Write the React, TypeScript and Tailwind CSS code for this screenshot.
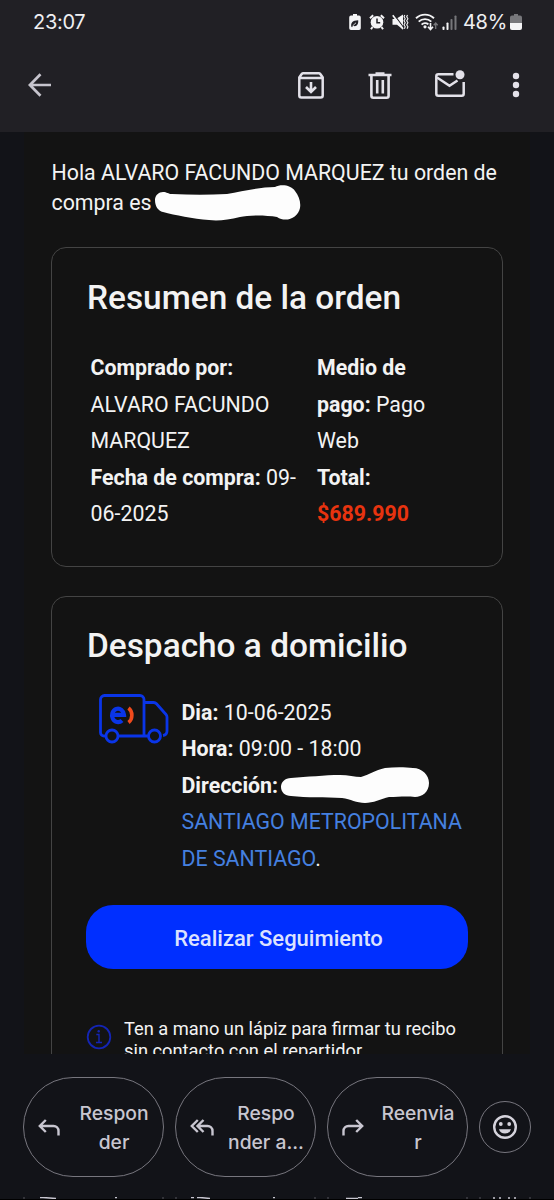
import React from "react";

interface IconProps {
  className?: string;
}

function BatteryLeafIcon() {
  return (
    <svg width="12" height="16" viewBox="0 0 12 16">
      <path d="M4 0h4v1.6h2a1.8 1.8 0 0 1 1.8 1.8v10.8A1.8 1.8 0 0 1 10 16H2a1.8 1.8 0 0 1-1.8-1.8V3.4A1.8 1.8 0 0 1 2 1.600h2z" fill="#f4f4f6" />
      <path d="M2.300 12.500c-.6-3.600 1.200-6 6.900-6.200.5 4.700-2.200 6.800-5 5.500l-1.200 1.500z" fill="#212025" />
      <path d="M3.500 12 7 8.800" stroke="#f4f4f6" strokeWidth="0.8" />
    </svg>
  );
}

function AlarmIcon() {
  return (
    <svg width="16" height="16" viewBox="0 0 16 16" fill="none">
      <circle cx="8" cy="8.300" r="6.300" fill="#f4f4f6" />
      <path d="M1 4.200 4.200 1.200M15 4.200 11.800 1.200M3.500 13l-1.500 2.200M12.500 13l1.500 2.200" stroke="#f4f4f6" strokeWidth="2" />
      <path d="M8 4.600v4.200h3.200" stroke="#212025" strokeWidth="1.500" />
    </svg>
  );
}

function MuteIcon() {
  return (
    <svg width="17" height="16" viewBox="0 0 17 16" fill="none">
      <path d="M.5 5h3.500l7-4.500v15l-6-4.700H.5z" fill="#f4f4f6" />
      <path d="M2 .5 12 14" stroke="#212025" strokeWidth="1.200" />
      <path d="M.8 1.200 11 15" stroke="#f4f4f6" strokeWidth="1.600" />
      <path d="m12.800 1-.8 1.800 1.200 2-1.200 2 1.200 2-1.200 2 1.200 2-.8 2M15.500 1l-.8 1.800 1.200 2-1.200 2 1.200 2-1.200 2 1.200 2-.8 2" stroke="#f4f4f6" strokeWidth="1.100" />
    </svg>
  );
}

function WifiIcon() {
  return (
    <svg width="24" height="18" viewBox="0 0 24 18" fill="none">
      <path d="M1 5.200a13 13 0 0 1 18 0M3.700 8.600a9.200 9.200 0 0 1 12.600 0M6.600 11.600a5 5 0 0 1 6.800-.2" stroke="#f4f4f6" strokeWidth="1.900" />
      <circle cx="10" cy="13.800" r="1.600" fill="#f4f4f6" />
      <path d="M15.500 10v6.500M13 13.800l2.500 2.700 2.500-2.700" stroke="#f4f4f6" strokeWidth="1.600" />
      <path d="M20.700 16v-6M18.700 12.300l2-2.300 2 2.300" stroke="#77777b" strokeWidth="1.300" />
    </svg>
  );
}

function SignalIcon() {
  return (
    <svg width="15" height="15" viewBox="0 0 15 15">
      <rect x="0.500" y="11.500" width="2" height="3.500" rx="0.800" fill="#f4f4f6" />
      <rect x="4.500" y="7.500" width="2" height="7.500" rx="0.800" fill="#f4f4f6" />
      <rect x="8.500" y="4" width="2" height="11" rx="0.800" fill="#77777b" />
      <rect x="12.500" y="0.500" width="2" height="14.500" rx="0.800" fill="#77777b" />
    </svg>
  );
}

function BatteryIcon() {
  return (
    <svg width="12" height="16" viewBox="0 0 12 16">
      <path d="M4 0h4v1.600h2a2 2 0 0 1 2 2V9H0V3.600a2 2 0 0 1 2-2h2z" fill="#77777b" />
      <path d="M0 9h12v5a2 2 0 0 1-2 2H2a2 2 0 0 1-2-2z" fill="#f4f4f6" />
    </svg>
  );
}

function BackIcon() {
  return (
    <svg width="24" height="24" viewBox="0 0 24 24" fill="none" stroke="#c6c4cd" strokeWidth="2.700">
      <path d="M12.500 1.200 1.900 12l10.600 10.800M2 12h21" />
    </svg>
  );
}

function ArchiveIcon() {
  return (
    <svg width="26" height="27" viewBox="0 0 26 27" fill="none" stroke="#e3e1e9" strokeWidth="2.500">
      <path d="M1.300 5.500V23.500a2 2 0 0 0 2 2h19.400a2 2 0 0 0 2-2V5.500L22.500 2.300a2 2 0 0 0-1.500-1H5a2 2 0 0 0-1.500 1zM2 6h22" />
      <path d="M13 10v8.500M8 15l5 5 5-5" strokeWidth="2.600" />
    </svg>
  );
}

function TrashIcon() {
  return (
    <svg width="24" height="27" viewBox="0 0 24 27" fill="none" stroke="#e3e1e9" strokeWidth="2.600">
      <path d="M.5 3h23M7.500 1.500h9" />
      <path d="M3.400 3v20.700a2 2 0 0 0 2 2h13.200a2 2 0 0 0 2-2V3M9.200 8v13.500M14.800 8v13.500" />
    </svg>
  );
}

function UnreadIcon() {
  return (
    <svg width="30" height="27" viewBox="0 0 30 27" fill="none" stroke="#e3e1e9" strokeWidth="2.500">
      <path d="M18.500 4.200H3.300a2 2 0 0 0-2 2v17.500a2 2 0 0 0 2 2h23.400a2 2 0 0 0 2-2V12" />
      <path d="m2 7.500 12.500 8.300L22.500 10.500" />
      <circle cx="25" cy="4.800" r="4.500" fill="#e3e1e9" stroke="none" />
    </svg>
  );
}

function MoreIcon() {
  return (
    <svg width="8" height="26" viewBox="0 0 8 26" fill="#e3e1e9">
      <circle cx="4" cy="4" r="3.200" />
      <circle cx="4" cy="13" r="3.200" />
      <circle cx="4" cy="22" r="3.200" />
    </svg>
  );
}

function TruckIcon() {
  return (
    <svg width="70" height="50" viewBox="0 0 70 50" fill="none" stroke="#0a35e8" strokeWidth="2.800">
      <path d="M6 42H5a3.500 3.500 0 0 1-3.500-3.500V5.500A4 4 0 0 1 5.500 1.500H41a4 4 0 0 1 4 4V42M19.500 42H49" />
      <path d="M45 8.500h9.500a4 4 0 0 1 3 1.300L67 20.500a4 4 0 0 1 1 2.600V37c0 2.500-1 4-4 4.500" />
      <circle cx="13" cy="42" r="6" />
      <circle cx="55.500" cy="42" r="6" />
      <path d="M13 20.800h12a6 6.700 0 1 0-2 5.600" strokeWidth="4.200" />
      <path d="M29.500 14c4.500 3.500 4.500 11 0 14.500" stroke="#f04a1c" strokeWidth="3.600" />
    </svg>
  );
}

function InfoIcon() {
  return (
    <svg width="26" height="26" viewBox="0 0 26 26" fill="none" stroke="#1425b4" strokeWidth="1.800">
      <circle cx="13" cy="13" r="11.300" />
      <path d="M10.300 10.500H13V18.500M10 18.500h6" strokeWidth="1.400" />
      <circle cx="12.700" cy="7.300" r="1.200" fill="#1425b4" stroke="none" />
    </svg>
  );
}

function ReplyIcon({ className }: IconProps) {
  return (
    <svg className={className} width="22" height="17" viewBox="0 0 22 17" fill="none" stroke="#c8c6d0" strokeWidth="2.400">
      <path d="M7.800 1 1.800 7l6 6M2 7h13.500a5 5 0 0 1 5 5v4.500" />
    </svg>
  );
}

function ReplyAllIcon() {
  return (
    <svg width="24" height="17" viewBox="0 0 24 17" fill="none" stroke="#c8c6d0" strokeWidth="2.400">
      <path d="m7.800 1-6 6 6 6M13.500 1l-6 6 6 6M8 7h9.500a5 5 0 0 1 5 5v4.500" />
    </svg>
  );
}

function SmileIcon() {
  return (
    <svg width="26" height="26" viewBox="0 0 26 26" fill="#d5d3dc">
      <circle cx="13" cy="13" r="10.800" fill="none" stroke="#d5d3dc" strokeWidth="2.400" />
      <circle cx="8.800" cy="10" r="1.900" />
      <circle cx="17.200" cy="10" r="1.900" />
      <path d="M7 15.200h12a6.300 6.300 0 0 1-12 0z" />
    </svg>
  );
}

// white marker strokes that hide the private data
function OrderRedaction() {
  return (
    <span className="relative inline-block w-0">
      <svg className="absolute -left-[3px] -top-[26px]" width="148" height="38" viewBox="0 0 148 38">
        <path d="M1 16C1 11 5 8 9 8c4 0 5 2 9 2 19 1 37 1 55 0 16-3 34-7 48-7 6-3 16-2 20 4 4 5 6 11 5 17-2 10-14 15-23 9-11-2-29-2-37 0-12 3-22 4-31 3-16-1-34-5-46-8C4 27 1 22 1 16z" fill="#fdfdfd" />
      </svg>
    </span>
  );
}

function AddressRedaction() {
  return (
    <span className="relative inline-block w-0">
      <svg className="absolute left-[2px] -top-[26px]" width="150" height="37" viewBox="0 -1 150 37">
        <path d="M1 19c0-5 4-9 10-9 16-1 34-3 49-3 8 0 15 2 21 2 8-2 14-7 24-9 9-1 20-1 28 0 9 0 16 7 16 15 0 9-7 14-14 14-9-1-17 0-26 0-8 2-16 6-24 6-9 0-14-4-23-5-17-1-35 0-51-2-6 0-10-4-10-9z" fill="#fdfdfd" />
      </svg>
    </span>
  );
}

function Header() {
  return (
    <header className="h-[132px] bg-[#212025]">
      <div className="flex h-[44px] items-center justify-between pl-[33px] pr-[32px]">
        <span className="font-['Inter',sans-serif] text-[20px] tracking-[-0.3px] text-[#efeff2]">23:07</span>
        <div className="flex items-center">
          <BatteryLeafIcon />
          <div className="ml-[8px]"><AlarmIcon /></div>
          <div className="ml-[7px]"><MuteIcon /></div>
          <div className="ml-[6px]"><WifiIcon /></div>
          <div className="ml-[3px]"><SignalIcon /></div>
          <span className="ml-[6px] font-['Inter',sans-serif] text-[20px] tracking-[-0.3px] text-[#efeff2]">48%</span>
          <div className="ml-[3px]"><BatteryIcon /></div>
        </div>
      </div>
      <div className="flex h-[82px] items-center pl-[28px] pr-[34px]">
        <BackIcon />
        <div className="ml-auto flex items-center">
          <ArchiveIcon />
          <div className="ml-[44px]"><TrashIcon /></div>
          <div className="-mt-[3px] ml-[43px]"><UnreadIcon /></div>
          <div className="ml-[47px]"><MoreIcon /></div>
        </div>
      </div>
    </header>
  );
}

function OrderSummary() {
  return (
    <section className="h-[320px] rounded-[15px] border border-[#444] px-[34px] pt-[28px]">
      <h2 className="pl-px text-[33.400px] font-medium leading-[44px]">Resumen de la orden</h2>
      <div className="mt-[30px] flex px-[4px] leading-[36.500px]">
        <p className="w-[227px] pl-[0.500px] pr-[15px]">
          <b>Comprado por:</b>
          <br />
          ALVARO FACUNDO
          <br />
          MARQUEZ
          <br />
          <b>Fecha de compra:</b> 09-
          <br />
          06-2025
        </p>
        <p>
          <b>Medio de</b>
          <br />
          <b>pago:</b> Pago
          <br />
          Web
          <br />
          <b>Total:</b>
          <br />
          <b className="text-[#e8330f]">$689.990</b>
        </p>
      </div>
    </section>
  );
}

function Delivery() {
  return (
    <section className="mt-[29px] h-[560px] rounded-[15px] border border-[#444] px-[34px] pt-[27px]">
      <h2 className="pl-px text-[33.400px] font-medium leading-[44px]">Despacho a domicilio</h2>
      <div className="mt-[26px] flex pl-[13px]">
        <TruckIcon />
        <p className="ml-[12.500px] whitespace-nowrap pt-[0.500px] leading-[36.500px]">
          <b>Dia:</b> 10-06-2025
          <br />
          <b>Hora:</b> 09:00 - 18:00
          <br />
          <b>Dirección:</b>
          <AddressRedaction />
          <br />
          <span className="text-[#4580e0]">
            SANTIAGO METROPOLITANA
            <br />
            DE SANTIAGO
          </span>
          .
        </p>
      </div>
      <button className="mt-[28px] flex h-[64px] w-[382px] items-center justify-center rounded-[27px] bg-[#002fff] pl-[3px] pt-[3px] text-[22px] font-medium text-[#dce2ff]">
        Realizar Seguimiento
      </button>
      <div className="mt-[49px] flex">
        <div className="mt-[6px]"><InfoIcon /></div>
        <p className="ml-[12px] whitespace-nowrap text-[18.300px] leading-[22px]">
          Ten a mano un lápiz para firmar tu recibo
          <br />
          sin contacto con el repartidor
        </p>
      </div>
    </section>
  );
}

interface ActionProps {
  icon: React.ReactNode;
  lines: [string, string];
}

function Action({ icon, lines }: ActionProps) {
  return (
    <button className="flex h-[100px] w-[141px] shrink-0 items-center rounded-[50px] border border-[#77767e] pl-[14px]">
      <div className="w-[24px]">{icon}</div>
      <span className="flex-1 pl-[3px] pt-px text-center font-['Inter',sans-serif] text-[19.300px] font-medium leading-[29px] text-[#c8c6d0]">
        {lines[0]}
        <br />
        {lines[1]}
      </span>
    </button>
  );
}

// top edge of the next row of actions, barely visible under the bar
function NextRowEdge() {
  return (
    <svg width="554" height="3" viewBox="0 0 554 3">
      <path d="M24 0v2M163 0v2M176 0v2M315 0v2M328 0v2M467 0v2M480 0v2M530 0v2" stroke="#55545b" />
      <path d="M40 .5h3l13 1M191 .5h3M197 .5h3l10 1M346 1.500h12M358 .5h4M494 0v2M500 0v2M509 0v2M515 0v2M115 .5h2M273 .5h2" stroke="#c8c6d0" strokeWidth="1.500" />
      <path d="M0 2.500h554" stroke="#000" />
    </svg>
  );
}

function ActionBar() {
  return (
    <footer className="flex h-[146px] flex-col bg-[#121318] pt-[23px]">
      <div className="flex items-center gap-[11px] pl-[23px]">
        <Action icon={<ReplyIcon />} lines={["Respon", "der"]} />
        <Action icon={<ReplyAllIcon />} lines={["Respo", "nder a..."]} />
        <Action icon={<ReplyIcon className="-scale-x-100" />} lines={["Reenvia", "r"]} />
        <button className="flex h-[52px] w-[52px] items-center justify-center rounded-full border border-[#77767e]">
          <SmileIcon />
        </button>
      </div>
      <div className="mt-auto">
        <NextRowEdge />
      </div>
    </footer>
  );
}

export default function App() {
  return (
    <div className="flex h-[1200px] w-[554px] flex-col overflow-hidden bg-[#121318] font-['Roboto',sans-serif] text-[21.350px] text-[#f3f3f3]">
      <Header />
      <main className="mx-[24px] h-[922px] overflow-hidden bg-[#131313] px-[27px] pt-[26px]">
        <p className="mb-[29px] h-[60px] whitespace-nowrap pl-[0.500px] leading-[30px]">
          Hola ALVARO FACUNDO MARQUEZ tu orden de
          <br />
          compra es <OrderRedaction />
        </p>
        <OrderSummary />
        <Delivery />
      </main>
      <ActionBar />
    </div>
  );
}
